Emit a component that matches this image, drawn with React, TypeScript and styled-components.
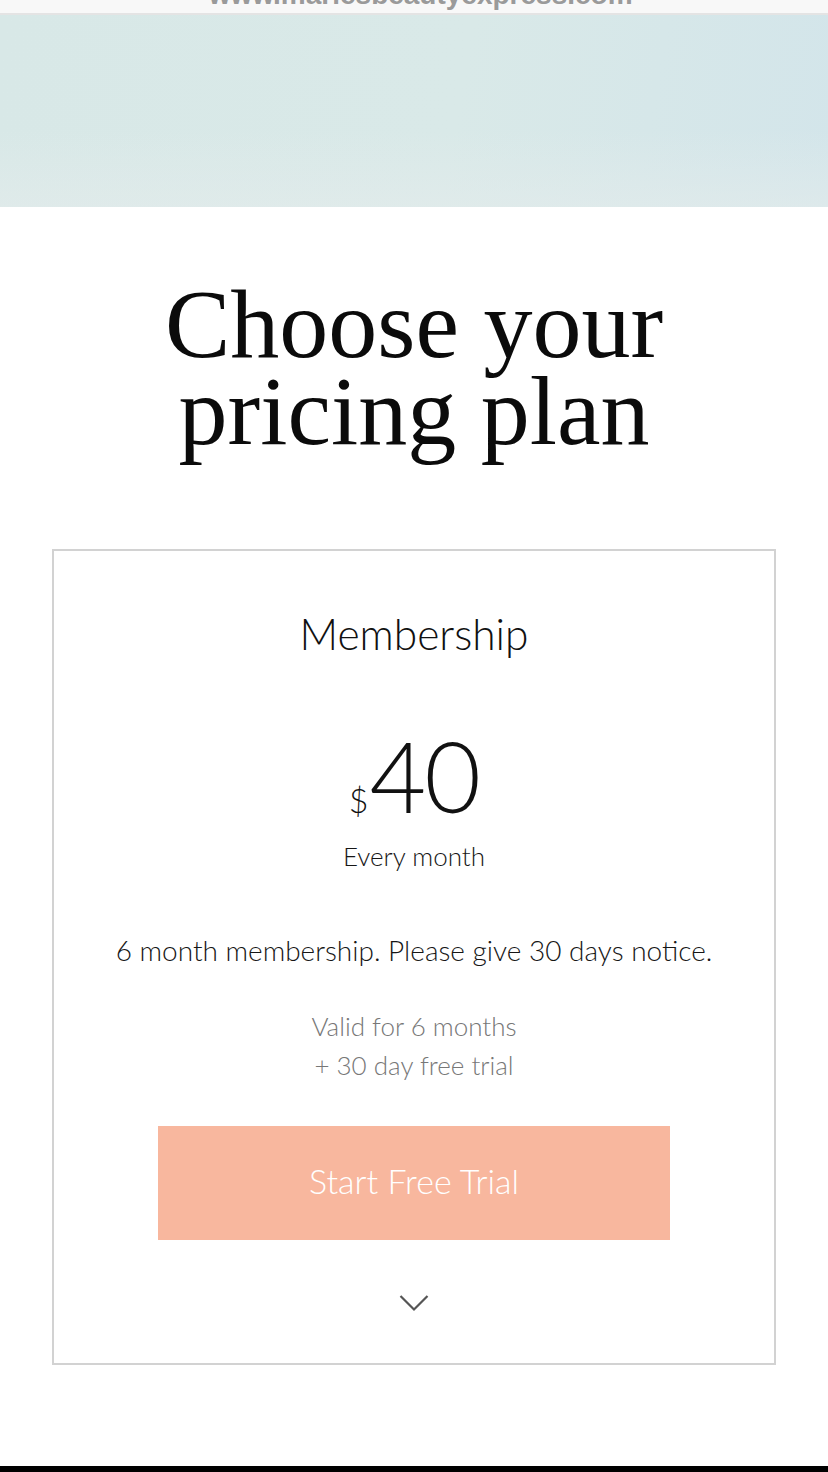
import React from 'react'
import styled, { createGlobalStyle } from 'styled-components'

const GlobalStyle = createGlobalStyle`
  html, body {
    margin: 0;
    padding: 0;
    background: #fff;
  }
  body {
    font-family: Lato, "Liberation Sans", sans-serif;
    color: #111;
  }
`

const Page = styled.div`
  width: 828px;
  min-height: 1472px;
  display: flex;
  flex-direction: column;
  background: #fff;
`

const UrlBar = styled.div`
  height: 13px;
  overflow: hidden;
  background: #f8f8f8;
  border-bottom: 2px solid #e4e4e4;
  display: flex;
  justify-content: center;
`

const UrlText = styled.div`
  font-family: "Liberation Sans", Arial, sans-serif;
  font-weight: 700;
  font-size: 28px;
  line-height: 28px;
  margin-top: -19px;
  padding-right: 10px;
  color: #9a9a9a;
  white-space: nowrap;
`

const Hero = styled.div`
  height: 192px;
  background:
    linear-gradient(180deg, rgba(255, 255, 255, 0) 60%, rgba(228, 236, 236, 0.6) 100%),
    linear-gradient(100deg, #d8e8e7 0%, #d9e9e8 55%, #d3e5ea 100%);
`

const Heading = styled.h1`
  margin: 74px 0 0;
  font-family: "Liberation Serif", "Times New Roman", serif;
  font-weight: 400;
  font-size: 98px;
  line-height: 87px;
  text-align: center;
  color: #0b0b0b;
`

const Card = styled.section`
  margin: 94px 52px 0;
  border: 2px solid #d2d2d2;
  padding: 57px 40px 51px;
  display: flex;
  flex-direction: column;
  align-items: center;
  text-align: center;
  font-weight: 300;
`

const PlanName = styled.div`
  font-size: 42.5px;
  line-height: 51px;
  color: #111;
`

const Price = styled.div`
  margin-top: 67px;
  display: flex;
  align-items: baseline;
  line-height: 1;
  color: #111;
`

const Currency = styled.span`
  font-size: 34px;
  margin-right: 1px;
`

const Amount = styled.span`
  font-size: 98px;
  letter-spacing: -2px;
`

const Text = styled.div<{ $size: number; $color?: string; $lh?: number }>`
  font-size: ${({ $size }) => $size}px;
  line-height: ${({ $lh }) => ($lh ? `${$lh}px` : '1.2')};
  color: ${({ $color }) => $color || '#161616'};
`

const Period = styled(Text)`
  margin-top: 17px;
`

const Description = styled(Text)`
  margin-top: 62px;
  white-space: nowrap;
`

const Validity = styled(Text)`
  margin-top: 39px;
`

const TrialButton = styled.button`
  margin-top: 41px;
  width: 512px;
  height: 114px;
  border: 0;
  padding: 0 0 4px;
  background: #f8b79e;
  color: #fff;
  font-family: Lato, "Liberation Sans", sans-serif;
  font-weight: 300;
  font-size: 34px;
  cursor: pointer;
`

const Chevron = styled.svg`
  margin-top: 54px;
  display: block;
`

const BottomBar = styled.div`
  margin-top: auto;
  height: 6px;
  background: #000;
`

const App = () => {
  return (
    <Page>
      <GlobalStyle />
      <UrlBar>
        <UrlText>– www.mariesbeautyexpress.com</UrlText>
      </UrlBar>
      <Hero />
      <Heading>
        Choose your
        <br />
        pricing plan
      </Heading>
      <Card>
        <PlanName>Membership</PlanName>
        <Price>
          <Currency>$</Currency>
          <Amount>40</Amount>
        </Price>
        <Period $size={26}>Every month</Period>
        <Description $size={28}>6 month membership. Please give 30 days notice.</Description>
        <Validity $size={26} $lh={39} $color="#777">
          Valid for 6 months
          <br />+ 30 day free trial
        </Validity>
        <TrialButton>Start Free Trial</TrialButton>
        <Chevron width="30" height="18" viewBox="0 0 30 18">
          <path d="M1.5 2 L15 15.5 L28.5 2" fill="none" stroke="#555" strokeWidth="2.2" />
        </Chevron>
      </Card>
      <BottomBar />
    </Page>
  )
}

export default App
